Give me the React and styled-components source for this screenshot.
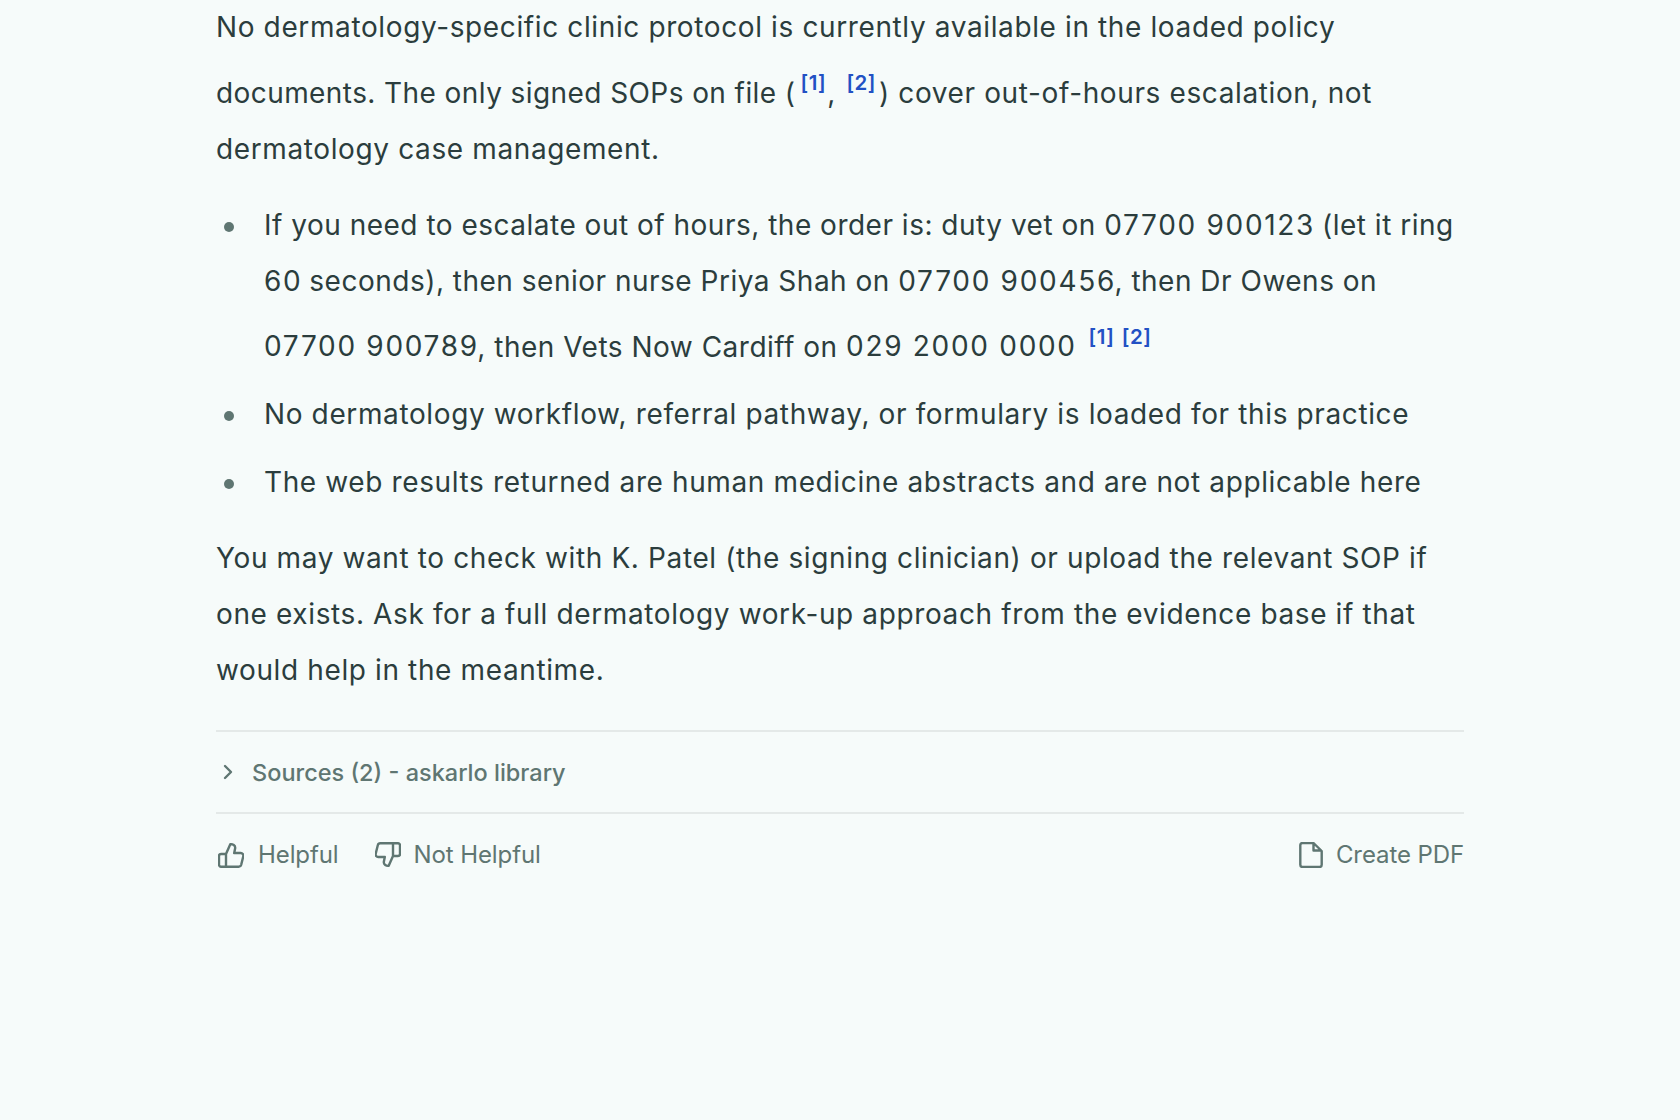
import React from 'react';
import styled, { createGlobalStyle } from 'styled-components';
import { ChevronRight } from 'lucide-react';

const Global = createGlobalStyle`
  html, body {
    margin: 0;
    padding: 0;
    background: #f6fbfa;
  }
`;

function Cite({ n, after }) {
  return <CiteMark $after={after}>[{n}]</CiteMark>;
}

const thumbPath = 'M9 13v12.7M9 13l4.3-9.8c2.5-.4 5.1 1.4 4.9 3.8l-1 5h6.6a2.6 2.6 0 0 1 2.5 3.2l-2.1 8.6a2.6 2.6 0 0 1-2.5 1.9H4a2 2 0 0 1-2-2V15a2 2 0 0 1 2-2h5';

function ThumbIcon({ down }) {
  return (
    <ActionIcon viewBox="1 1 26 26" width="26" height="26" $flip={down}>
      <path d={thumbPath} />
    </ActionIcon>
  );
}

function DocIcon() {
  return (
    <ActionIcon viewBox="2 1 24 26" width="24" height="26">
      <path d="M16.5 2H5.5a2.2 2.2 0 0 0-2.2 2.2v19.6A2.2 2.2 0 0 0 5.5 26h17a2.2 2.2 0 0 0 2.2-2.2V10zM16.5 2.5v7h7.5" />
    </ActionIcon>
  );
}

function App() {
  return (
    <Page>
      <Global />
      <Answer>
        <Para>
          No dermatology-specific clinic protocol is currently available in the loaded policy
          {' '}<Lead>documents. The only signed SOPs on file (</Lead><Cite n={1} />, <Cite n={2} after={3} />) cover out-of-hours escalation, not
          dermatology case management.
        </Para>
        <Bullets>
          <li>
            If you need to escalate out of hours, the order is: duty vet on <Num>07700 900123</Num> (let it ring
            {' '}<Num>60</Num> seconds), then senior nurse Priya Shah on <Num>07700 900456</Num>, then Dr Owens on
            {' '}<Num>07700 900789</Num>, then Vets Now Cardiff on <Num>029 2000 0000</Num> <Cites><Cite n={1} /> <Cite n={2} /></Cites>
          </li>
          <li>No dermatology workflow, referral pathway, or formulary is loaded for this practice</li>
          <li>The web results returned are human medicine abstracts and are not applicable here</li>
        </Bullets>
        <Para>
          You may want to check with K. Patel (the signing clinician) or upload the relevant SOP if
          one exists. Ask for a full dermatology work-up approach from the evidence base if that
          would help in the meantime.
        </Para>
      </Answer>
      <Sources>
        <ChevronRight size={24} strokeWidth={2.4} />
        <span>Sources (2) - askarlo library</span>
      </Sources>
      <Actions>
        <ActionGroup>
          <Action $gap={14}><ThumbIcon />Helpful</Action>
          <Action><ThumbIcon down />Not Helpful</Action>
        </ActionGroup>
        <Action><DocIcon />Create PDF</Action>
      </Actions>
    </Page>
  );
}

const Page = styled.div`
  width: 1248px;
  margin: -1px auto 0;
  min-height: 1120px;
  font-family: Inter, "Liberation Sans", sans-serif;
  color: #2b3d3d;
`;

const Answer = styled.div`
  font-size: 28px;
  line-height: 56px;
  letter-spacing: 0.62px;
`;

const Para = styled.p`
  margin: 0;
`;

const Lead = styled.span`
  letter-spacing: 0.42px;
  padding-right: 3px;
`;

const Num = styled.span`
  letter-spacing: 1.7px;
  margin-right: -1.5px;
`;

const CiteMark = styled.sup`
  color: #2251c4;
  font-size: 20.5px;
  font-weight: 600;
  vertical-align: 12.5px;
  padding: 0 ${({ $after }) => $after || 1}px 0 2px;
  letter-spacing: 0.5px;
`;

const Cites = styled.span`
  word-spacing: -4px;
  margin-left: 3px;
`;

const Bullets = styled.ul`
  margin: 20px 0;
  padding: 0 0 0 48px;
  list-style: none;

  li {
    position: relative;
    margin-bottom: 12px;
  }
  li:first-child {
    letter-spacing: 0.5px;
  }
  li:last-child {
    margin-bottom: 0;
  }
  li::before {
    content: "";
    position: absolute;
    left: -40px;
    bottom: 21px;
    width: 10px;
    height: 10px;
    border-radius: 50%;
    background: #5f7672;
  }
  li:first-child::before {
    top: 25px;
    bottom: auto;
  }
`;

const Sources = styled.div`
  margin-top: 32px;
  border-top: 2px solid #e4e9e8;
  border-bottom: 2px solid #e4e9e8;
  height: 80px;
  display: flex;
  align-items: center;
  gap: 12px;
  color: #5f7672;
  font-size: 23.5px;
  font-weight: 500;
`;

const Actions = styled.div`
  display: flex;
  justify-content: space-between;
  align-items: center;
  margin-top: 26px;
`;

const ActionGroup = styled.div`
  display: flex;
  gap: 36px;
  padding-left: 2px;
`;

const Action = styled.div`
  display: flex;
  align-items: center;
  gap: ${({ $gap }) => $gap || 13}px;
  color: #5f7672;
  font-size: 24px;
  letter-spacing: -0.1px;
`;

const ActionIcon = styled.svg`
  fill: none;
  stroke: currentColor;
  stroke-width: 2.4;
  stroke-linejoin: round;
  stroke-linecap: round;
  transform: ${({ $flip }) => ($flip ? 'rotate(180deg)' : 'none')};
`;

export default App;
